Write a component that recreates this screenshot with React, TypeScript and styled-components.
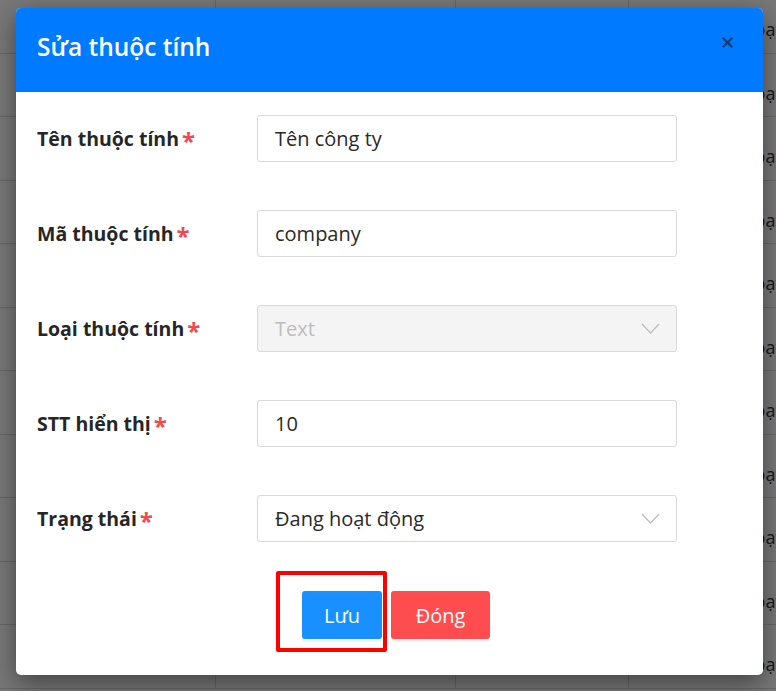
import React from "react";
import styled, { createGlobalStyle } from "styled-components";

const Global = createGlobalStyle`
  html, body { margin: 0; padding: 0; }
  body { font-family: "Open Sans", "Noto Sans", Arial, sans-serif; background: #fff; }
  * { box-sizing: border-box; }
`;

const Page = styled.div`
  position: relative;
  width: 776px;
  height: 691px;
  overflow: hidden;
  background: #fff;
`;

const Table = styled.div`
  display: flex;
  flex-direction: column;
  margin-top: -10px;
`;

const TRow = styled.div`
  display: grid;
  grid-template-columns: 216px 240px 173px 1fr;
  height: 63.5px;
  border-bottom: 1px solid #dcdcdc;
`;

const TCell = styled.div`
  border-right: 1px solid #dcdcdc;
  display: flex;
  align-items: center;
  padding-top: 16px;
  font-size: 18px;
  color: #333;
  white-space: nowrap;
  overflow: hidden;
  &:last-child { border-right: none; padding-left: 66px; }
`;

const Backdrop = styled.div`
  position: absolute;
  inset: 0;
  background: rgba(0, 0, 0, 0.53);
`;

const Modal = styled.div`
  position: absolute;
  left: 16px;
  top: 8px;
  width: 747px;
  height: 667px;
  background: #fff;
  border-radius: 5px;
  box-shadow: 0 8px 26px rgba(0, 0, 0, 0.45);
  display: flex;
  flex-direction: column;
  overflow: hidden;
`;

const Header = styled.div`
  height: 84px;
  background: #007bff;
  display: flex;
  align-items: center;
  justify-content: space-between;
  padding: 0 30px 0 21px;
`;

const Title = styled.h2`
  margin: 0;
  margin-top: -8px;
  font-size: 24.5px;
  font-weight: 600;
  color: #fff;
`;

const Close = styled.button`
  border: none;
  background: transparent;
  padding: 0;
  margin-top: -16px;
  width: 12px;
  height: 12px;
  display: flex;
  align-items: center;
  justify-content: center;
  cursor: pointer;
`;

const Body = styled.div`
  display: flex;
  flex-direction: column;
  gap: 48px;
  padding: 23px 86px 0 21px;
`;

const Row = styled.div`
  display: grid;
  grid-template-columns: 220px 420px;
  align-items: center;
`;

const Label = styled.label`
  font-size: 19.5px;
  font-weight: 700;
  color: #262626;
  display: flex;
  align-items: center;
`;

const Star = styled.span`
  color: #f5474f;
  margin-left: 3px;
  font-size: 24px;
  line-height: 1;
  margin-top: 4px;
`;

const Field = styled.div<{ $disabled?: boolean }>`
  height: 47px;
  border: 1px solid #d9d9d9;
  border-radius: 3px;
  background: ${(p) => (p.$disabled ? "#f4f4f4" : "#fff")};
  color: ${(p) => (p.$disabled ? "#bdbdbd" : "#2a2a2a")};
  font-size: 20px;
  display: flex;
  align-items: center;
  justify-content: space-between;
  padding: 0 16px 0 17px;
`;

const Footer = styled.div`
  display: flex;
  justify-content: center;
  gap: 9px;
  padding-left: 13px;
  margin-top: 49px;
`;

const Highlight = styled.div`
  position: relative;
`;

const Marker = styled.div`
  position: absolute;
  left: -26px;
  top: -20px;
  width: 111px;
  height: 81px;
  border: 4px solid #ff0000;
  border-radius: 2px;
  pointer-events: none;
`;

const Button = styled.button<{ $variant: "primary" | "danger"; $w: number }>`
  width: ${(p) => p.$w}px;
  height: 48px;
  border: none;
  border-radius: 3px;
  font-family: inherit;
  font-size: 20px;
  color: #fff;
  background: ${(p) => (p.$variant === "primary" ? "#1890ff" : "#ff4d4f")};
  box-shadow: 0 3px 0 rgba(0, 0, 0, 0.05);
  cursor: pointer;
`;

const Chevron = () => (
  <svg width="19" height="11" viewBox="0 0 19 11">
    <polyline points="1,1 9.5,10 18,1" fill="none" stroke="#bdbdbd" strokeWidth="1.3" />
  </svg>
);

const rows = [
  { label: "Tên thuộc tính", value: "Tên công ty" },
  { label: "Mã thuộc tính", value: "company" },
  { label: "Loại thuộc tính", value: "Text", disabled: true, select: true },
  { label: "STT hiển thị", value: "10" },
  { label: "Trạng thái", value: "Đang hoạt động", select: true },
];

export default function App() {
  return (
    <Page>
      <Global />
      <Table>
        {Array.from({ length: 11 }).map((_, i) => (
          <TRow key={i}>
            <TCell />
            <TCell />
            <TCell />
            <TCell>Đang hoạt động</TCell>
          </TRow>
        ))}
      </Table>
      <Backdrop />
      <Modal>
        <Header>
          <Title>Sửa thuộc tính</Title>
          <Close aria-label="Đóng">
            <svg width="11" height="11" viewBox="0 0 11 11">
              <path d="M1.5 1.5 L9.5 9.5 M9.5 1.5 L1.5 9.5" stroke="#0d3d78" strokeWidth="2.4" strokeLinecap="round" />
            </svg>
          </Close>
        </Header>
        <Body>
          {rows.map((r) => (
            <Row key={r.label}>
              <Label>
                {r.label}
                <Star>*</Star>
              </Label>
              <Field $disabled={r.disabled}>
                <span>{r.value}</span>
                {r.select && <Chevron />}
              </Field>
            </Row>
          ))}
        </Body>
        <Footer>
          <Highlight>
            <Button $variant="primary" $w={80}>Lưu</Button>
            <Marker />
          </Highlight>
          <Button $variant="danger" $w={99}>Đóng</Button>
        </Footer>
      </Modal>
    </Page>
  );
}
